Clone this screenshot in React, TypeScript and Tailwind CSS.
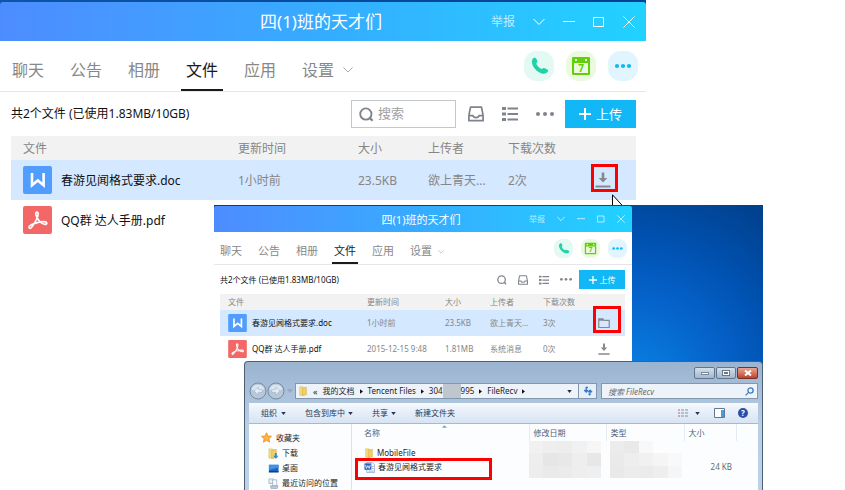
import React from "react";

type Size = "lg" | "sm";

const fontStack =
  "font-['Noto_Sans','Noto_Sans_CJK_SC',sans-serif]";

const lg = {
  title: "h-[39px] text-[17px] rounded-t-[3px]",
  titleActions: "gap-[18px] pr-[11px] text-[12px]",
  windowIcon: "size-3",
  tabBar: "h-[51px] pl-[7px] pr-2",
  tabs: "gap-4 text-[16px]",
  tab: "w-[42px] border-b-2 pt-[10px]",
  tabChevron: "w-[10px]",
  rounds: "gap-3",
  round: "size-[30px]",
  toolbar: "h-[44px] pl-[11px] pr-[10px] text-[12px]",
  tools: "gap-[18px] mr-[11px]",
  toolIcon: "size-4",
  dots: "w-[18px]",
  upload: "h-7 w-[71px] gap-[5px] text-[13px]",
  plus: "size-3",
  tableWrap: "ml-[11px] mr-[10px] text-[12px]",
  headRow: "h-6",
  row: "h-10",
  nameCell: "pl-3",
  cellPad: "pt-[2px]",
  nameInner: "gap-[9px]",
  fileIcon: "h-7 w-[29px]",
  mark: "h-7 w-[27px] -top-2 -left-1",
  markIcon: "size-4",
  cols: ["w-[120px]", "w-[70px]", "w-[80px]", "w-[62px]", "w-[66px]"],
};

const sm: typeof lg = {
  title: "h-[26px] text-[11px] rounded-t-[2px]",
  titleActions: "gap-3 pr-[7px] text-[8px]",
  windowIcon: "size-2",
  tabBar: "h-[33px] pl-1 pr-[5px]",
  tabs: "gap-3 text-[11px]",
  tab: "w-[26px] border-b-2 pt-[7px]",
  tabChevron: "w-[6px]",
  rounds: "gap-2",
  round: "size-[19px]",
  toolbar: "h-[29px] pl-[6px] pr-[7px] text-[8px]",
  tools: "gap-[11px] mr-[7px]",
  toolIcon: "size-[10px]",
  dots: "w-3",
  upload: "h-[19px] w-[46px] gap-[3px] text-[8px]",
  plus: "size-2",
  tableWrap: "ml-[6px] mr-[7px] text-[8px]",
  headRow: "h-4",
  row: "h-[26px]",
  nameCell: "pl-2",
  cellPad: "pt-0",
  nameInner: "gap-[5px]",
  fileIcon: "h-[18px] w-[19px]",
  mark: "h-[27px] w-7 -top-[11px] -left-[5px]",
  markIcon: "size-3",
  cols: ["w-[78px]", "w-[45px]", "w-[53px]", "w-[40px]", "w-[42px]"],
};

type IconProps = { className?: string };

const Chevron = ({ className }: IconProps) => (
  <svg viewBox="0 0 12 7" className={className} fill="none" stroke="currentColor">
    <path d="M.5.5 6 6 11.5.5" />
  </svg>
);

const SearchIcon = ({ className }: IconProps) => (
  <svg viewBox="0 0 16 16" className={className} fill="none" stroke="#7f848c" strokeWidth="2">
    <circle cx="7.3" cy="7.5" r="6" />
    <path d="m11.5 11.7 3 3" strokeWidth="2.4" />
  </svg>
);

const InboxIcon = ({ className }: IconProps) => (
  <svg viewBox="0 0 16 16" className={className} fill="none" stroke="#7f848c" strokeWidth="1.7">
    <path d="M2.5 1.2h11l1.6 8.3v5.2H.9V9.5z" strokeLinejoin="round" />
    <path d="M1 9.6h3.8c.4 1.4 1.5 2.1 3.2 2.1s2.800-.7 3.200-2.100H15" />
  </svg>
);

const ListIcon = ({ className }: IconProps) => (
  <svg viewBox="0 0 16 16" className={className} fill="#7f848c">
    <path d="M0 1h4v3H0zM0 6.500h4v3H0zM0 12h4v3H0zM5.500 1.500H16v2H5.500zM5.500 7H16v2H5.500zM5.500 12.500H16v2H5.500z" />
  </svg>
);

const DotsIcon = ({ className }: IconProps) => (
  <svg viewBox="0 0 18 4" className={className} fill="currentColor">
    <circle cx="2" cy="2" r="2" />
    <circle cx="9" cy="2" r="2" />
    <circle cx="16" cy="2" r="2" />
  </svg>
);

const PlusIcon = ({ className }: IconProps) => (
  <svg viewBox="0 0 12 12" className={className} stroke="#fff" strokeWidth="2">
    <path d="M6 0v12M0 6h12" />
  </svg>
);

const DownloadIcon = ({ className }: IconProps) => (
  <svg viewBox="0 0 16 16" className={className} fill="#86898f">
    <path d="M6.700.500h2.600v5.500h3L8 10.500 3.700 6h3zM.500 13.500h15v2H.500z" />
  </svg>
);

const OpenFolderIcon = ({ className }: IconProps) => (
  <svg viewBox="0 0 16 16" className={className} fill="none" stroke="#86898f" strokeWidth="1.600">
    <path d="M1 14V2.500h5.500l1.300 2H15V14z" />
    <path d="M1 3.800h6" strokeWidth="2.400" />
  </svg>
);

const DocIcon = ({ className }: IconProps) => (
  <svg viewBox="0 0 29 28" className={className}>
    <rect width="29" height="28" rx="2" fill="#509dfe" />
    <path d="M9 7v12.300l5.800-4.800 5.800 4.800V7" fill="none" stroke="#fff" strokeWidth="2.600" />
  </svg>
);

const PdfIcon = ({ className }: IconProps) => (
  <svg viewBox="0 0 29 28" className={className}>
    <rect width="29" height="28" rx="2" fill="#f46767" />
    <path
      d="M13 9C12 5 15.800 5 15 9c-.5 4-4 9-6.200 12-1.800 2.500-3.800.8-2.300-1C8.500 18 16 15.700 21 15.700c3.500 0 3.500 2.800 1 2.600-4-.3-7.700-4.800-9-9.300z"
      fill="none"
      stroke="#fff"
      strokeWidth="1.700"
    />
  </svg>
);

const PhoneRound = ({ className }: IconProps) => (
  <svg viewBox="0 0 30 30" className={className}>
    <rect width="30" height="30" rx="12.500" fill="#e3f9f3" />
    <path
      d="M11.800 7.200c1 1 1.500 2.200 1.500 3.500 0 .8-1 1.200-1 2 .8 2 3 4.200 5.200 5.200.8.200 1.300-.9 2.200-.8 1.300.2 2.800.9 4.200 2 .5.500.3 1.400-.5 2.200-1.300 1.400-3.300 1.700-5.700 1.100C13 21 8.800 16.500 8 12c-.4-2.200.3-4 1.700-4.900.7-.4 1.500-.5 2.100.1z"
      fill="#20d3a7"
    />
  </svg>
);

const CalendarRound = ({ className }: IconProps) => (
  <svg viewBox="0 0 30 30" className={className}>
    <rect width="30" height="30" rx="12.500" fill="#ebf9df" />
    <path d="M6 7.200C6 6.500 6.500 6 7.200 6h15.600c.7 0 1.200.5 1.200 1.200v15.600c0 .7-.5 1.200-1.200 1.200H7.200c-.7 0-1.200-.5-1.200-1.200z" fill="#5fd10a" />
    <path d="M8 12h14v10H8zM9 8h2v2H9zM19 8h2v2h-2z" fill="#ebf9df" />
    <text x="15" y="20.500" textAnchor="middle" fontSize="10" fontWeight="700" fill="#5fd10a">
      7
    </text>
  </svg>
);

const MoreRound = ({ className }: IconProps) => (
  <svg viewBox="0 0 30 30" className={className}>
    <rect width="30" height="30" rx="12.500" fill="#e1f5fe" />
    <g fill="#12b7f5">
      <circle cx="9" cy="15" r="2.100" />
      <circle cx="15" cy="15" r="2.100" />
      <circle cx="21" cy="15" r="2.100" />
    </g>
  </svg>
);

interface FileRow {
  kind: "doc" | "pdf";
  name: string;
  time: string;
  size: string;
  owner: string;
  count: string;
  action?: "download" | "folder";
  marked?: boolean;
}

const tabNames = ["聊天", "公告", "相册", "文件", "应用", "设置"];

function GroupWindow({ size, files }: { size: Size; files: FileRow[] }) {
  const s = size === "lg" ? lg : sm;
  return (
    <section>
      <header
        className={`grid grid-cols-[1fr_auto_1fr] items-center bg-linear-to-r from-[#4d8cff] via-[#35acff] to-[#20d2ff] text-white ${s.title}`}
      >
        <span />
        <h1 className="pr-1 leading-none whitespace-nowrap">四(1)班的天才们</h1>
        <div className={`flex items-center justify-end ${s.titleActions}`}>
          <button className="leading-none text-white/70">举报</button>
          <button aria-label="更多">
            <Chevron className={s.windowIcon} />
          </button>
          <button aria-label="最小化">
            <svg viewBox="0 0 12 12" className={s.windowIcon} stroke="currentColor">
              <path d="M0 5.500h12" />
            </svg>
          </button>
          <button aria-label="最大化">
            <svg viewBox="0 0 12 12" className={s.windowIcon} stroke="currentColor" fill="none">
              <path d="M.5 1.500h10v9H.5z" />
            </svg>
          </button>
          <button aria-label="关闭">
            <svg viewBox="0 0 12 12" className={s.windowIcon} stroke="currentColor">
              <path d="m.5.5 11 11M11.500.5l-11 11" />
            </svg>
          </button>
        </div>
      </header>

      <div className={`flex justify-between border-b border-[#e6e6e6] bg-white ${s.tabBar}`}>
        <nav className={`flex ${s.tabs}`}>
          {tabNames.map((t) => (
            <button
              key={t}
              className={`flex items-center justify-center leading-none whitespace-nowrap ${s.tab} ${
                t === "文件" ? "border-[#1a1a1a] text-[#1a1a1a]" : "border-transparent text-[#888888]"
              }`}
            >
              {t}
            </button>
          ))}
          <span className={`flex items-center pt-2 text-[#999] ${size === "lg" ? "-ml-3" : "-ml-2"}`}>
            <Chevron className={s.tabChevron} />
          </span>
        </nav>
        <div className={`flex items-center ${s.rounds}`}>
          <button aria-label="通话">
            <PhoneRound className={s.round} />
          </button>
          <button aria-label="日历">
            <CalendarRound className={s.round} />
          </button>
          <button aria-label="更多应用">
            <MoreRound className={s.round} />
          </button>
        </div>
      </div>

      <div className={`flex items-center bg-white ${s.toolbar}`}>
        <p className="flex-1 whitespace-nowrap text-[#111]">共2个文件 (已使用1.83MB/10GB)</p>
        {size === "lg" && (
          <label className="mr-3 flex h-7 w-[105px] items-center gap-1 border border-[#c3c8cd] px-[7px]">
            <SearchIcon className="size-[15px] shrink-0" />
            <input
              aria-label="搜索"
              placeholder="搜索"
              className="w-full min-w-0 text-[13px] outline-none placeholder:text-[#a0a0a0]"
            />
          </label>
        )}
        <div className={`flex items-center text-[#7f848c] ${s.tools}`}>
          {size === "sm" && (
            <button aria-label="搜索">
              <SearchIcon className={s.toolIcon} />
            </button>
          )}
          <button aria-label="收件箱">
            <InboxIcon className={s.toolIcon} />
          </button>
          <button aria-label="列表">
            <ListIcon className={s.toolIcon} />
          </button>
          <button aria-label="更多操作">
            <DotsIcon className={s.dots} />
          </button>
        </div>
        <button className={`flex items-center justify-center bg-[#12b7f5] leading-none text-white ${s.upload}`}>
          <PlusIcon className={s.plus} />
          上传
        </button>
      </div>

      <div className="bg-white">
        <div className={s.tableWrap}>
          <table className="w-full table-fixed border-collapse leading-none whitespace-nowrap text-[#868686]">
            <colgroup>
              <col />
              {s.cols.map((c, i) => (
                <col key={i} className={c} />
              ))}
            </colgroup>
            <thead>
              <tr className={`bg-[#f2f2f2] text-left ${s.headRow}`}>
                <th className={`px-0 pb-0 font-normal ${s.nameCell} ${s.cellPad}`}>文件</th>
                <th className={`px-0 pb-0 font-normal ${s.cellPad}`}>更新时间</th>
                <th className={`px-0 pb-0 font-normal ${s.cellPad}`}>大小</th>
                <th className={`px-0 pb-0 font-normal ${s.cellPad}`}>上传者</th>
                <th className={`px-0 pb-0 font-normal ${s.cellPad}`}>下载次数</th>
                <th className="p-0" aria-label="操作" />
              </tr>
            </thead>
            <tbody>
              {files.map((f) => (
                <tr key={f.name} className={`${s.row} ${f.kind === "doc" ? "bg-[#d4e8ff]" : ""}`}>
                  <td className={`p-0 text-[#111] ${s.nameCell}`}>
                    <div className={`flex items-center ${s.nameInner}`}>
                      {f.kind === "doc" ? <DocIcon className={s.fileIcon} /> : <PdfIcon className={s.fileIcon} />}
                      <span className={s.cellPad}>{f.name}</span>
                    </div>
                  </td>
                  <td className={`px-0 pb-0 ${s.cellPad}`}>{f.time}</td>
                  <td className={`px-0 pb-0 ${s.cellPad}`}>{f.size}</td>
                  <td className={`px-0 pb-0 ${s.cellPad}`}>{f.owner}</td>
                  <td className={`px-0 pb-0 ${s.cellPad}`}>{f.count}</td>
                  <td className="p-0">
                    {f.action && (
                      <button
                        aria-label={f.action === "folder" ? "打开文件夹" : "下载"}
                        className="relative mx-auto block"
                      >
                        {f.action === "folder" ? (
                          <OpenFolderIcon className={s.markIcon} />
                        ) : (
                          <DownloadIcon className={s.markIcon} />
                        )}
                        {f.marked && <span className={`absolute border-3 border-[#fe0000] ${s.mark}`} />}
                      </button>
                    )}
                  </td>
                </tr>
              ))}
            </tbody>
          </table>
        </div>
      </div>
    </section>
  );
}

const FolderIcon = ({ className }: IconProps) => (
  <svg viewBox="0 0 12 12" className={className}>
    <path d="M2 1h4l1 1v9H2z" fill="#f5df8e" stroke="#d8b548" strokeWidth=".6" />
    <path d="M5 2.500 10 1.500V10.500L5 11.500z" fill="#f0cf6a" stroke="#cfa63a" strokeWidth=".6" />
  </svg>
);

const DownloadFolderIcon = ({ className }: IconProps) => (
  <svg viewBox="0 0 12 12" className={className}>
    <path d="M1 1h4l1 1v9H1z" fill="#f5df8e" stroke="#d8b548" strokeWidth=".6" />
    <path d="M4 2.500 9 1.500V10.500L4 11.500z" fill="#f0cf6a" stroke="#cfa63a" strokeWidth=".6" />
    <path d="M7.500 5.500h2v3h2l-3 3.200-3-3.200h2z" fill="#2a8be0" />
  </svg>
);

const StarIcon = ({ className }: IconProps) => (
  <svg viewBox="0 0 12 12" className={className}>
    <path d="m6 .8 1.600 3.500 3.900.4-2.900 2.600.8 3.900L6 9.200l-3.400 2 .8-3.900L.5 4.700l3.900-.4z" fill="#fdb43c" stroke="#e08417" strokeWidth=".7" />
  </svg>
);

const DesktopIcon = ({ className }: IconProps) => (
  <svg viewBox="0 0 12 12" className={className}>
    <path d="M1 2h10.500v8H1z" fill="#1c62c4" />
    <path d="M1 2h10.500v3L1 7.500z" fill="#3f93e6" />
    <path d="M1 9h10.500v1.300H1z" fill="#17335f" />
  </svg>
);

const RecentIcon = ({ className }: IconProps) => (
  <svg viewBox="0 0 12 12" className={className}>
    <path d="M1 1h5v5H1z" fill="#e6edf3" stroke="#8fa3b5" strokeWidth=".7" />
    <path d="M5 2h4.500v6.500H5z" fill="#f6f9fb" stroke="#8fa3b5" strokeWidth=".7" />
    <path d="M2.500 8.500h8.500l-1 3H3.500z" fill="#bdc9d3" stroke="#8296a8" strokeWidth=".6" />
  </svg>
);

const WordFileIcon = ({ className }: IconProps) => (
  <svg viewBox="0 0 12 12" className={className}>
    <path d="M3 .5h6l2.500 2.500v8.500H3z" fill="#f5f8fd" stroke="#7d95bd" strokeWidth=".7" />
    <path d="M8.500 5h2M8.500 7h2M5 10h5.500" stroke="#7da0d8" strokeWidth=".8" />
    <path d="M.5 1.500h7.500v7H.5z" fill="#2f62b5" />
    <path d="m1.600 3.200 1.100 3.800L4.200 4 5.700 7l1.100-3.800" fill="none" stroke="#fff" strokeWidth=".9" />
  </svg>
);

const Caret = ({ className }: IconProps) => (
  <svg viewBox="0 0 6 4" className={className} fill="currentColor">
    <path d="M0 0h6L3 4z" />
  </svg>
);

const CrumbArrow = () => (
  <svg viewBox="0 0 4 6" className="h-[5px] w-[3px] shrink-0" fill="#111">
    <path d="m0 0 4 3-4 3z" />
  </svg>
);

const NavArrow = ({ flip }: { flip?: boolean }) => (
  <svg viewBox="0 0 18 18" className={`size-[18px] ${flip ? "-scale-x-100" : ""}`}>
    <circle cx="9" cy="9" r="8" fill="#b7c8da" stroke="#71859b" strokeWidth=".9" />
    <path d="M2.500 7.500a6.800 6.800 0 0 1 13 0c-4 1.500-9 1.500-13 0z" fill="#dbe5ef" />
    <path d="M9.300 5 5.200 9l4.100 4v-2.700h4V7.700h-4z" fill="#e8f0f7" stroke="#9db0c4" strokeWidth=".6" />
  </svg>
);

const places = [
  { label: "下载", Icon: DownloadFolderIcon },
  { label: "桌面", Icon: DesktopIcon },
  { label: "最近访问的位置", Icon: RecentIcon },
];

const mosaicA = [
  "bg-[#f1f1f1]", "bg-[#eeeeee]", "bg-[#ededed]", "bg-[#f1f1f1]", "bg-[#f6f6f6]",
  "bg-[#eeeeee]", "bg-[#e6e6e6]", "bg-[#e8e8e8]", "bg-[#eeeeee]", "bg-[#e7e7e7]",
  "bg-[#ededed]", "bg-[#eaeaea]", "bg-[#ebebeb]", "bg-[#eeeeee]", "bg-[#efefef]",
];
const mosaicB = [
  "bg-[#ececec]", "bg-[#e9e9e9]", "bg-[#f8f8f8]", "bg-transparent", "bg-transparent",
  "bg-[#eaeaea]", "bg-[#eeeeee]", "bg-[#f1f1f1]", "bg-[#f5f5f5]", "bg-[#f9f9f9]",
  "bg-[#e9e9e9]", "bg-[#ececec]", "bg-[#ebebeb]", "bg-[#eeeeee]", "bg-[#f6f6f6]",
];

const Mosaic = ({ cells }: { cells: string[] }) => (
  <div className="grid h-[37px] w-[72px] grid-cols-5 grid-rows-3">
    {cells.map((c, i) => (
      <span key={i} className={c} />
    ))}
  </div>
);

function Explorer() {
  return (
    <section className="flex h-full flex-col rounded-t-[4px] border border-b-0 border-[#4d5f73] bg-linear-to-b from-[#9ab3cf] via-[#b9cfe6] to-[#bcd2ea] px-1 text-[8px] leading-none text-[#1d1d1d]">
      <div className="flex h-5 justify-end gap-px pt-[5px]">
        <button aria-label="最小化" className="flex h-3 w-[21px] items-center justify-center rounded-[2px] border border-[#62778f] bg-linear-to-b from-[#d3dfec] to-[#a3b7cd]">
          <span className="h-[3px] w-2 border border-[#7a8794] bg-white" />
        </button>
        <button aria-label="最大化" className="flex h-3 w-[20px] items-center justify-center rounded-[2px] border border-[#62778f] bg-linear-to-b from-[#d3dfec] to-[#a3b7cd]">
          <span className="flex h-[6px] w-2 items-center justify-center border border-[#6b7886] bg-white">
            <span className="h-[2px] w-1 bg-[#6b7886]" />
          </span>
        </button>
        <button aria-label="关闭" className="flex h-3 w-[21px] items-center justify-center rounded-[2px] border border-[#7a3028] bg-linear-to-b from-[#e8a594] to-[#c0402a]">
          <svg viewBox="0 0 8 6" className="h-[6px] w-2" stroke="#fff" strokeWidth="2">
            <path d="m1 .5 6 5M7 .5l-6 5" />
          </svg>
        </button>
      </div>

      <div className="flex h-[18px] items-center">
        <button aria-label="后退">
          <NavArrow />
        </button>
        <button aria-label="前进">
          <NavArrow flip />
        </button>
        <Caret className="mx-[2px] h-1 w-[6px] text-[#93a9c2]" />
        <div className="flex h-4 min-w-0 flex-1 items-center gap-[5px] border border-[#8296ad] bg-[#eef3fa] pl-[2px] whitespace-nowrap">
          <FolderIcon className="size-[10px]" />
          <span className="text-[9px]">«</span>
          <span>我的文档</span>
          <CrumbArrow />
          <span>Tencent Files</span>
          <CrumbArrow />
          <span className="flex items-center">
            304
            <span className="h-[14px] w-[18px] bg-[#c0c6ce]" />
            995
          </span>
          <CrumbArrow />
          <span>FileRecv</span>
          <CrumbArrow />
          <Caret className="mr-[6px] ml-auto h-[3px] w-[5px] text-[#1b2a55]" />
        </div>
        <button aria-label="刷新" className="flex h-4 w-[18px] items-center justify-center border border-l-0 border-[#8296ad] bg-[#e6eef8]">
          <svg viewBox="0 0 10 10" className="size-[10px]" fill="none" stroke="#2f77c9" strokeWidth="1.300">
            <path d="M5 1.500H3.200v4M1.200 4l2 2 1.800-2M5.500 8.500h1.500V4.800M5.200 6.200l1.900-2 1.900 2" />
          </svg>
        </button>
        <label className="ml-1 flex h-4 w-[157px] items-center border border-[#8296ad] bg-[#eef3fa] pr-[3px] pl-[6px]">
          <input
            aria-label="搜索 FileRecv"
            placeholder="搜索 FileRecv"
            className="w-full min-w-0 italic outline-none placeholder:text-[#6d6d6d]"
          />
          <svg viewBox="0 0 9 9" className="size-[9px] shrink-0" fill="none" stroke="#3a7cc4" strokeWidth="1.300">
            <circle cx="5.500" cy="3.500" r="2.600" />
            <path d="M3.600 5.400.6 8.400" />
          </svg>
        </label>
      </div>

      <div className="mt-[3px] flex h-[21px] items-center justify-between border-b border-[#a9b8cc] bg-linear-to-b from-[#f7fafe] via-[#e5edf8] to-[#d8e4f3] pr-[10px] pl-3 text-[#1e3957]">
        <div className="flex items-center gap-[19px]">
          <button className="flex items-center gap-1">
            组织 <Caret className="h-[3px] w-[5px]" />
          </button>
          <button className="flex items-center gap-[3px]">
            包含到库中 <Caret className="h-[3px] w-[5px]" />
          </button>
          <button className="flex items-center gap-[3px]">
            共享 <Caret className="h-[3px] w-[5px]" />
          </button>
          <button>新建文件夹</button>
        </div>
        <div className="flex items-center">
          <button aria-label="视图" className="flex items-center gap-[7px]">
            <svg viewBox="0 0 10 8" className="h-2 w-[10px]" strokeWidth="1.200">
              <path d="M0 1h2M0 4h2M0 7h2" stroke="#b06a6a" />
              <path d="M3 1h3M7 1h3M3 4h3M7 4h3M3 7h3M7 7h3" stroke="#7f93ac" />
            </svg>
            <Caret className="h-[3px] w-[5px]" />
          </button>
          <button aria-label="预览窗格" className="ml-[14px]">
            <svg viewBox="0 0 11 10" className="h-[10px] w-[11px]">
              <path d="M.5.5h10v9H.5z" fill="#fff" stroke="#5f7896" />
              <path d="M7 2h3v7H7z" fill="#4d9bd0" />
            </svg>
          </button>
          <button aria-label="帮助" className="ml-[13px] flex size-[10px] items-center justify-center rounded-full bg-[#2b4fa8] font-bold text-white">
            ?
          </button>
        </div>
      </div>

      <div className="flex min-h-0 flex-1 bg-[#fcfdfe]">
        <nav className="flex w-[103px] shrink-0 flex-col gap-[5px] overflow-hidden border-r border-[#d9e3ef] pt-2 pl-3 whitespace-nowrap">
          <a href="#favorites" className="flex h-[11px] items-center gap-1">
            <StarIcon className="size-[11px]" />
            收藏夹
          </a>
          {places.map(({ label, Icon }) => (
            <a key={label} href={`#${label}`} className="flex h-[10px] items-center gap-[3px] pl-[7px]">
              <Icon className="size-[11px]" />
              {label}
            </a>
          ))}
        </nav>
        <div className="min-w-0 flex-1 overflow-hidden">
          <table className="w-full table-fixed border-collapse whitespace-nowrap">
            <colgroup>
              <col />
              <col className="w-[77px]" />
              <col className="w-[78px]" />
              <col className="w-[52px]" />
              <col className="w-[22px]" />
            </colgroup>
            <thead>
              <tr className="h-[17px] text-left text-[#4c607a]">
                <th className="relative border-r border-[#e3ebf4] p-0 pl-3 font-normal">
                  名称
                  <svg viewBox="0 0 6 3" className="absolute top-px left-[90px] h-[3px] w-[5px]" fill="#6fa3cf">
                    <path d="M0 3h6L3 0z" />
                  </svg>
                </th>
                <th className="border-r border-[#e3ebf4] p-0 pl-1 font-normal">修改日期</th>
                <th className="border-r border-[#e3ebf4] p-0 pl-1 font-normal">类型</th>
                <th className="border-r border-[#e3ebf4] p-0 pl-1 font-normal">大小</th>
                <th className="p-0" aria-label="空" />
              </tr>
            </thead>
            <tbody>
              <tr className="h-[16px]">
                <td className="p-0 pt-[7px] pl-3">
                  <span className="flex items-center gap-[3px]">
                    <FolderIcon className="size-[10px]" />
                    MobileFile
                  </span>
                </td>
                <td className="p-0 align-top" rowSpan={2}>
                  <Mosaic cells={mosaicA} />
                </td>
                <td className="p-0 pl-1 align-top" rowSpan={2}>
                  <Mosaic cells={mosaicB} />
                </td>
                <td className="p-0" />
                <td className="p-0" />
              </tr>
              <tr className="h-[22px]">
                <td className="p-0 pl-[3px]">
                  <span className="flex h-[22px] w-[137px] items-center gap-[3px] border-3 border-[#fe0000] pb-1 pl-[6px]">
                    <WordFileIcon className="size-[11px]" />
                    春游见闻格式要求
                  </span>
                </td>
                <td className="p-0 pr-1 pb-1 text-right text-[#5f6b78]">24 KB</td>
                <td className="p-0" />
              </tr>
            </tbody>
          </table>
        </div>
      </div>
    </section>
  );
}

const beforeFiles: FileRow[] = [
  { kind: "doc", name: "春游见闻格式要求.doc", time: "1小时前", size: "23.5KB", owner: "欲上青天...", count: "2次", action: "download", marked: true },
  { kind: "pdf", name: "QQ群 达人手册.pdf", time: "", size: "", owner: "", count: "" },
];

const afterFiles: FileRow[] = [
  { kind: "doc", name: "春游见闻格式要求.doc", time: "1小时前", size: "23.5KB", owner: "欲上青天...", count: "3次", action: "folder", marked: true },
  { kind: "pdf", name: "QQ群 达人手册.pdf", time: "2015-12-15 9:48", size: "1.81MB", owner: "系统消息", count: "0次", action: "download" },
];

export default function App() {
  return (
    <main className={`relative min-h-screen overflow-hidden bg-white ${fontStack}`}>
      <div className="mr-[199px] bg-linear-to-r from-[#0c55a8] to-[#064090] pt-[2px]">
        <GroupWindow size="lg" files={beforeFiles} />
      </div>

      <svg viewBox="0 0 12 18" className="absolute top-[194px] right-[221px] h-[18px] w-3" fill="#fff" stroke="#000">
        <path d="M.5.8v16l4-4h7z" />
      </svg>

      <div className="absolute top-[205px] right-[82px] bottom-0 left-[214px] overflow-hidden bg-[radial-gradient(circle_at_76%_64%,#0a84e6_0%,#0563cb_90px,#0050ae_155px,#01408c_220px)] pt-px">
        <div className="mr-[131px] h-full bg-linear-to-b from-[#0c55a8] from-[4px] to-white to-[4px]">
          <GroupWindow size="sm" files={afterFiles} />
        </div>
        <div className="absolute top-[156px] right-0 bottom-0 left-[30px]">
          <Explorer />
        </div>
      </div>
    </main>
  );
}
